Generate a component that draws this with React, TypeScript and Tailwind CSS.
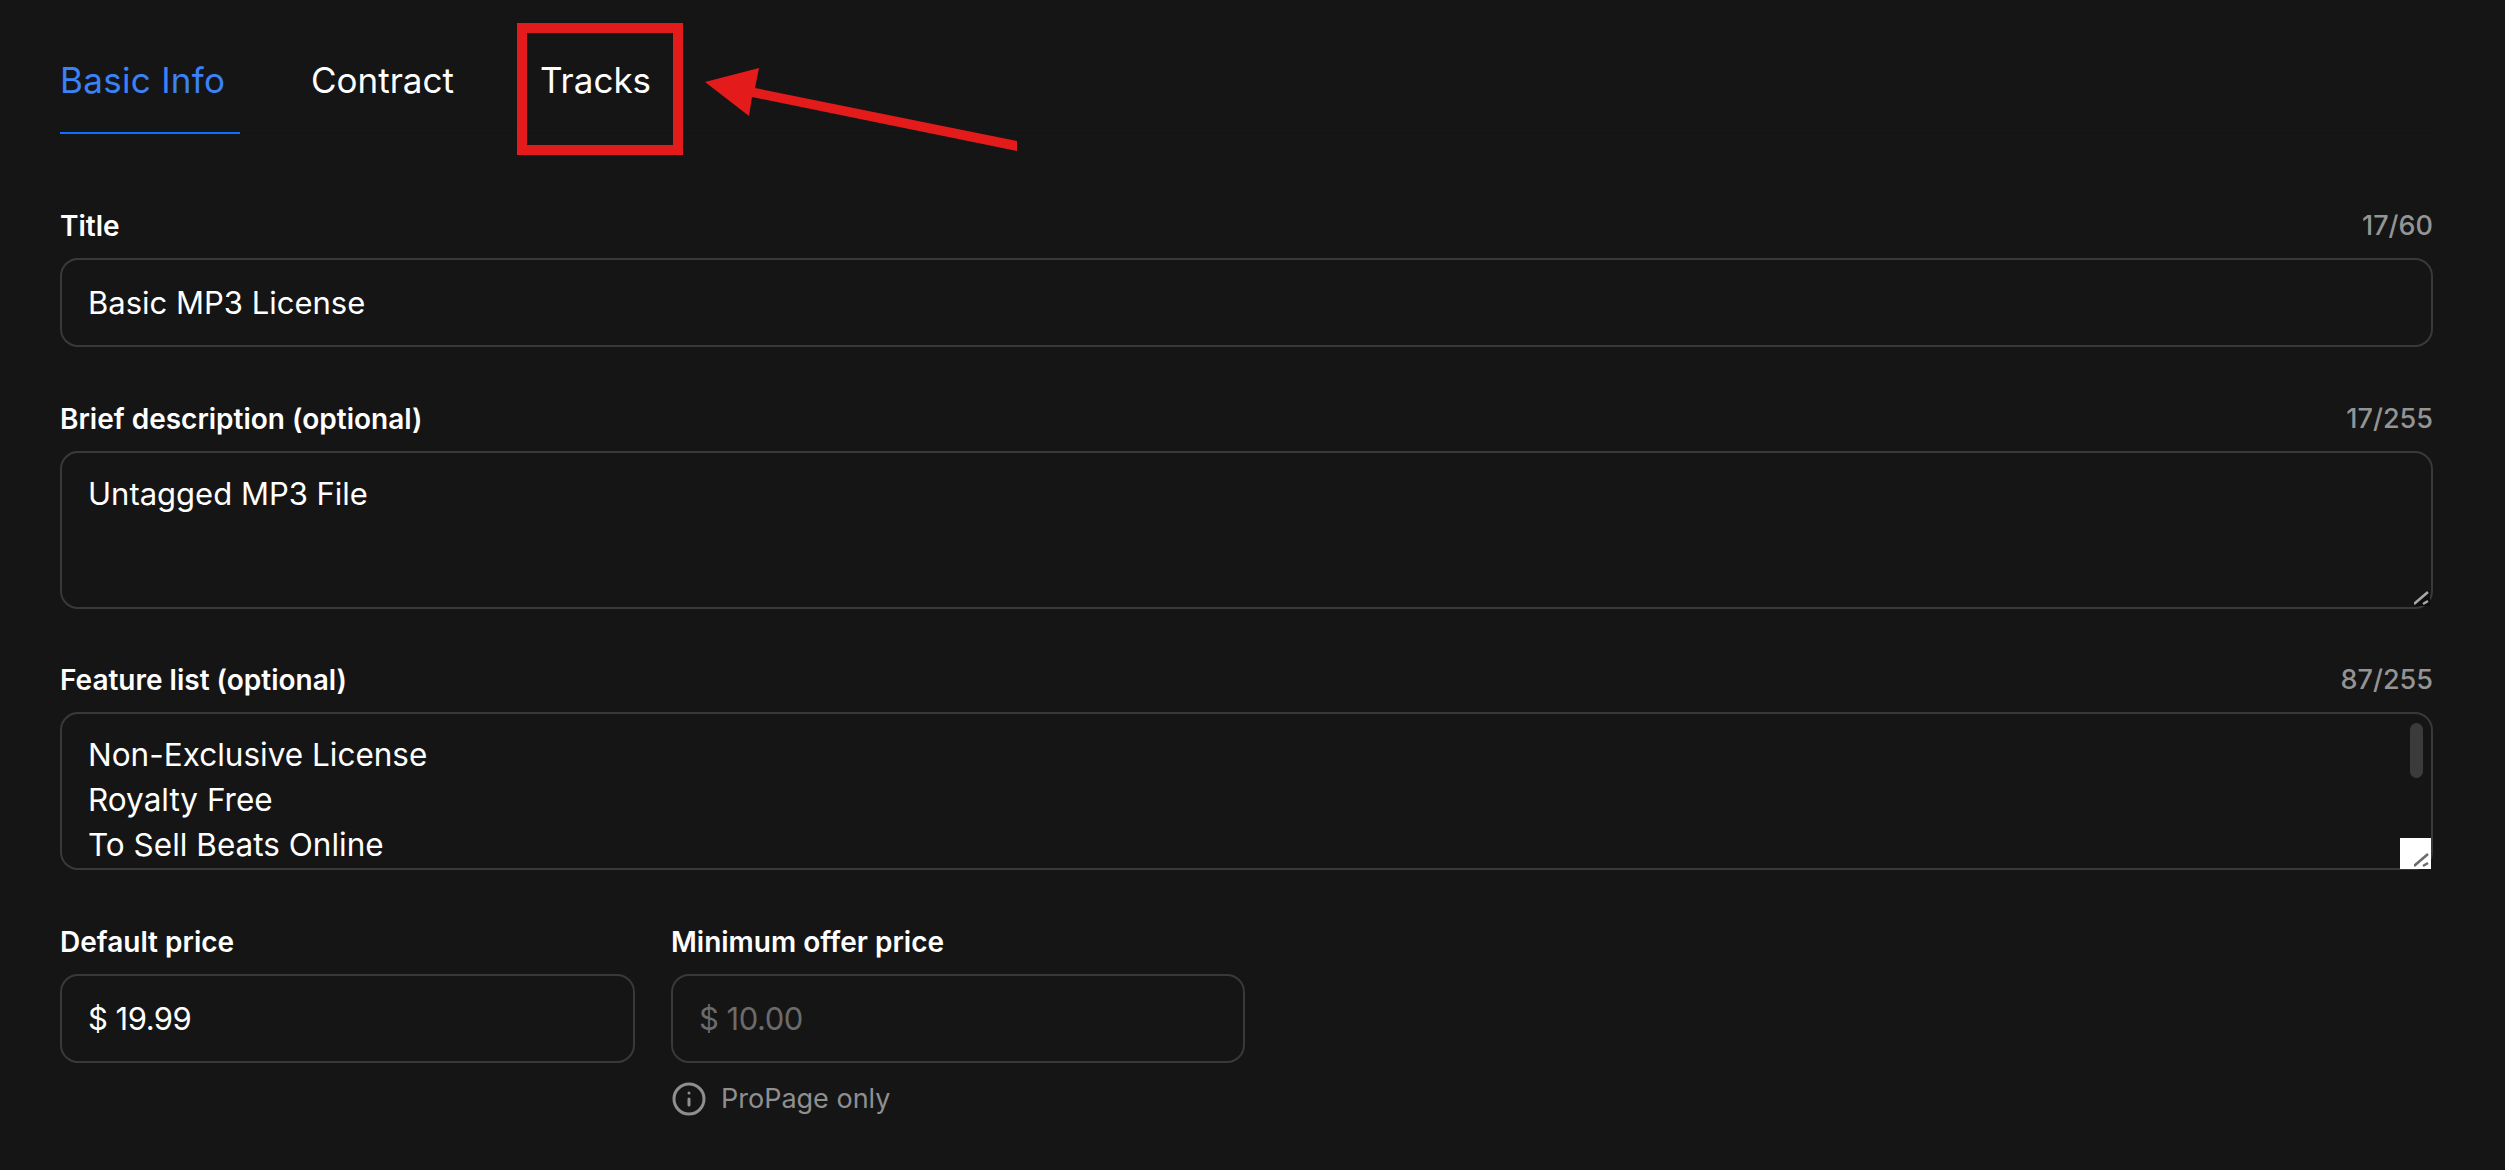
import { Info } from 'lucide-react'

const font = "font-['Inter',sans-serif]"

function FieldLabel({ label, count }: { label: string; count?: string }) {
  return (
    <div className="flex items-center justify-between h-[34px] pt-[2px] mb-[16px]">
      <span className="text-[28px] font-semibold text-white">{label}</span>
      {count && <span className="text-[27px] font-medium text-[#949494]">{count}</span>}
    </div>
  )
}

function ResizeGrip({ color, className }: { color: string; className: string }) {
  return (
    <svg className={`absolute ${className}`} width="16" height="16" viewBox="0 0 16 16">
      <path d="M0 14 L14 0 L16 2 L16 16 L2 16 Z" fill={color === '#a8a8a8' ? '#0d0d0d' : 'none'} />
      <path d="M0 14 L14 2" stroke={color} strokeWidth="2.5" />
      <path d="M9 14 L14 11" stroke={color} strokeWidth="2.5" />
    </svg>
  )
}

export default function App() {
  return (
    <div className={`${font} relative w-[2505px] h-[1170px] overflow-hidden bg-[#151515] pl-[60px] pr-[72px]`}>
      {/* Tabs */}
      <div className="flex h-[134px] border-b border-[#121212] text-[35px] leading-[54px] pt-[53px]">
        <div className="w-[180px] h-[81px] border-b-2 border-[#0f6fff] text-[#3b82f6] tracking-[0.3px]">Basic Info</div>
        <div className="ml-[71px] text-white">Contract</div>
        <div className="ml-[86px] text-white">Tracks</div>
      </div>

      {/* Title */}
      <div className="mt-[74px]">
        <FieldLabel label="Title" count="17/60" />
        <input
          readOnly
          value="Basic MP3 License"
          className="block w-full h-[89px] rounded-[18px] border-2 border-[#393939] bg-transparent px-[26px] text-[31px] text-white outline-none"
        />
      </div>

      {/* Brief description */}
      <div className="mt-[54px]">
        <FieldLabel label="Brief description (optional)" count="17/255" />
        <div className="relative h-[158px]">
          <textarea
            readOnly
            value="Untagged MP3 File"
            className="block w-full h-full resize-none overflow-hidden rounded-[18px] border-2 border-[#393939] bg-transparent px-[26px] py-[18px] text-[31px] leading-[45px] text-white outline-none"
          />
          <ResizeGrip color="#a8a8a8" className="right-[3px] bottom-[3px]" />
        </div>
      </div>

      {/* Feature list */}
      <div className="mt-[53px]">
        <FieldLabel label="Feature list (optional)" count="87/255" />
        <div className="relative h-[158px]">
          <textarea
            readOnly
            value={'Non-Exclusive License\nRoyalty Free\nTo Sell Beats Online'}
            className="block w-full h-full resize-none overflow-hidden rounded-[18px] border-2 border-[#393939] bg-transparent px-[26px] py-[18px] text-[31.5px] leading-[45px] text-white outline-none"
          />
          <div className="absolute right-[10px] top-[11px] w-[13px] h-[55px] rounded-full bg-[#3b3b3b]" />
          <div className="absolute right-[2px] bottom-[1px] w-[31px] h-[31px] bg-white">
            <ResizeGrip color="#6b6b6b" className="right-[1px] bottom-[1px]" />
          </div>
        </div>
      </div>

      {/* Prices */}
      <div className="flex gap-[36px] mt-[54px]">
        <div className="w-[575px]">
          <FieldLabel label="Default price" />
          <input
            readOnly
            value="$ 19.99"
            className="block w-full h-[89px] rounded-[18px] border-2 border-[#393939] bg-transparent px-[26px] text-[31px] tracking-[-0.5px] text-white outline-none"
          />
        </div>
        <div className="w-[574px]">
          <FieldLabel label="Minimum offer price" />
          <input
            readOnly
            placeholder="$ 10.00"
            className="block w-full h-[89px] rounded-[18px] border-2 border-[#393939] bg-transparent px-[26px] text-[31px] tracking-[-0.5px] text-white outline-none placeholder:text-[#6b6b6b]"
          />
          <div className="flex items-center gap-[14px] mt-[16px] text-[27px] text-[#8f8f8f]">
            <Info className="w-[36px] h-[36px]" strokeWidth={2} />
            <span>ProPage only</span>
          </div>
        </div>
      </div>

      {/* Annotation */}
      <div className="absolute left-[517px] top-[23px] w-[166px] h-[132px] border-[10px] border-[#e31b1b]" />
      <svg className="absolute left-[700px] top-[60px]" width="325" height="100" viewBox="700 60 325 100">
        <polygon points="705,82 759,68 755,88 1017,141 1017,151 752,97 749,116" fill="#e31b1b" />
      </svg>
    </div>
  )
}
